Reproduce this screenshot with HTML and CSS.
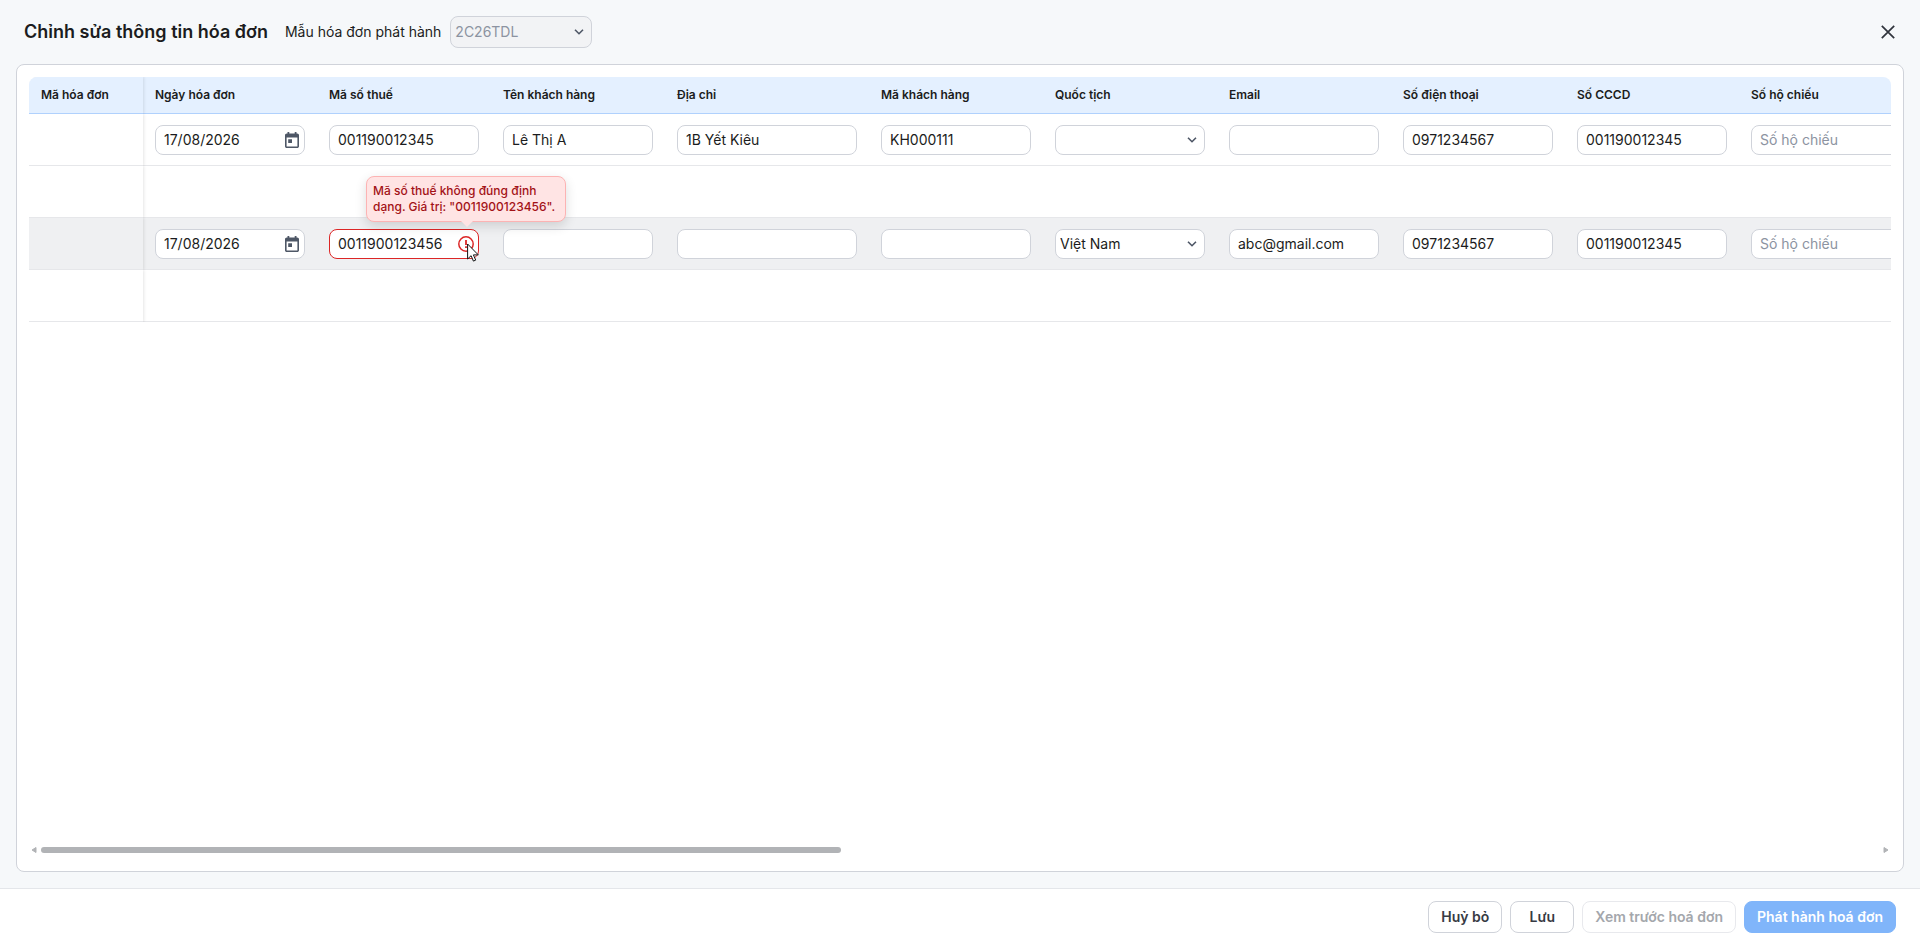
FILE: index.html
```html
<!DOCTYPE html>
<html lang="vi">
<head>
<meta charset="utf-8">
<title>Chỉnh sửa thông tin hóa đơn</title>
<link rel="stylesheet" href="styles.css">
</head>
<body>
<svg class="defs" aria-hidden="true">
  <symbol id="i-date" viewBox="0 0 14 16"><path fill="currentColor" fill-rule="evenodd" d="M2.500 0h1.800v1.500h5.400V0h1.800v1.500h.7c1 0 1.800.8 1.800 1.800v10.900c0 1-.8 1.800-1.800 1.800H1.800c-1 0-1.800-.8-1.800-1.800V3.300c0-1 .8-1.800 1.800-1.800h.7zM1.600 5.600v8.800h10.800V5.600zM3.200 7.200H7V11H3.200z"/></symbol>
  <symbol id="i-chevron" viewBox="0 0 10 6"><path fill="none" stroke="currentColor" stroke-width="1.600" d="M1 .7l4 4 4-4"/></symbol>
</svg>
<header class="topbar">
  <h1 class="title">Chỉnh sửa thông tin hóa đơn</h1>
  <label class="template-label" for="template">Mẫu hóa đơn phát hành</label>
  <span class="field template">
    <select class="control select" id="template" disabled><option>2C26TDL</option></select>
    <svg class="chevron"><use href="#i-chevron"/></svg>
  </span>
  <button class="close" type="button" aria-label="Đóng"><svg viewBox="0 0 14 14"><path fill="none" stroke="currentColor" stroke-width="1.700" d="M.8.8l12.400 12.400M13.200.8L.8 13.200"/></svg></button>
</header>
<main class="card">
  <div class="table-view">
    <table class="table">
      <colgroup><col class="c-code"><col class="c-std"><col class="c-std"><col class="c-std"><col class="c-wide"><col class="c-std"><col class="c-std"><col class="c-std"><col class="c-std"><col class="c-std"><col class="c-std"></colgroup>
      <thead>
        <tr><th class="pin">Mã hóa đơn</th><th>Ngày hóa đơn</th><th>Mã số thuế</th><th>Tên khách hàng</th><th>Địa chỉ</th><th>Mã khách hàng</th><th>Quốc tịch</th><th>Email</th><th>Số điện thoại</th><th>Số CCCD</th><th>Số hộ chiếu</th></tr>
      </thead>
      <tbody>
        <tr>
          <td class="pin"></td>
          <td><span class="field"><input class="control" aria-label="Ngày hóa đơn" value="17/08/2026"><svg class="date"><use href="#i-date"/></svg></span></td>
          <td><input class="control" aria-label="Mã số thuế" value="001190012345"></td>
          <td><input class="control" aria-label="Tên khách hàng" value="Lê Thị A"></td>
          <td><input class="control" aria-label="Địa chỉ" value="1B Yết Kiêu"></td>
          <td><input class="control" aria-label="Mã khách hàng" value="KH000111"></td>
          <td><span class="field"><select class="control select" aria-label="Quốc tịch"><option></option><option>Việt Nam</option></select><svg class="chevron"><use href="#i-chevron"/></svg></span></td>
          <td><input class="control" aria-label="Email"></td>
          <td><input class="control" aria-label="Số điện thoại" value="0971234567"></td>
          <td><input class="control" aria-label="Số CCCD" value="001190012345"></td>
          <td><input class="control" aria-label="Số hộ chiếu" placeholder="Số hộ chiếu"></td>
        </tr>
        <tr><td class="pin"></td><td colspan="10"></td></tr>
        <tr class="active">
          <td class="pin"></td>
          <td><span class="field"><input class="control" aria-label="Ngày hóa đơn" value="17/08/2026"><svg class="date"><use href="#i-date"/></svg></span></td>
          <td>
            <span class="field">
              <input class="control invalid" aria-label="Mã số thuế" aria-invalid="true" aria-describedby="tax-error" value="0011900123456">
              <svg class="alert" viewBox="0 0 16 16"><circle cx="8" cy="8" r="7.200" fill="none" stroke="currentColor" stroke-width="1.500"/><path fill="currentColor" d="M7.100 4h1.800v5H7.100zM7.100 10.200h1.800V12H7.100z"/></svg>
              <span class="tooltip" id="tax-error" role="tooltip">Mã số thuế không đúng định dạng. Giá trị: "0011900123456".</span>
              <svg class="cursor" viewBox="0 0 12 19"><path fill="#fff" stroke="#111" d="M.6 1v15l3.500-3.300 2.300 5.400 2.300-1-2.300-5.200h4.900z"/></svg>
            </span>
          </td>
          <td><input class="control" aria-label="Tên khách hàng"></td>
          <td><input class="control" aria-label="Địa chỉ"></td>
          <td><input class="control" aria-label="Mã khách hàng"></td>
          <td><span class="field"><select class="control select" aria-label="Quốc tịch"><option>Việt Nam</option></select><svg class="chevron"><use href="#i-chevron"/></svg></span></td>
          <td><input class="control" aria-label="Email" value="abc@gmail.com"></td>
          <td><input class="control" aria-label="Số điện thoại" value="0971234567"></td>
          <td><input class="control" aria-label="Số CCCD" value="001190012345"></td>
          <td><input class="control" aria-label="Số hộ chiếu" placeholder="Số hộ chiếu"></td>
        </tr>
        <tr><td class="pin"></td><td colspan="10"></td></tr>
      </tbody>
    </table>
  </div>
  <div class="scrollbar" aria-hidden="true">
    <svg class="arrow" viewBox="0 0 6 6"><path fill="currentColor" stroke="currentColor" stroke-linejoin="round" d="M5 .5v5L1 3z"/></svg>
    <div class="track"><div class="thumb"></div></div>
    <svg class="arrow" viewBox="0 0 6 6"><path fill="currentColor" stroke="currentColor" stroke-linejoin="round" d="M1 .5v5L5 3z"/></svg>
  </div>
</main>
<footer class="actions">
  <button class="btn" type="button">Huỷ bỏ</button>
  <button class="btn" type="button">Lưu</button>
  <button class="btn" type="button" disabled>Xem trước hoá đơn</button>
  <button class="btn primary" type="button" disabled>Phát hành hoá đơn</button>
</footer>
</body>
</html>
```
FILE: styles.css
```css
* { box-sizing: border-box; }

body {
  margin: 0;
  min-height: 100vh;
  display: flex;
  flex-direction: column;
  background: #f6f8fa;
  color: #1b1c20;
  font: 14px/20px Inter, "Noto Sans", sans-serif;
}

button, input, select { font: inherit; color: inherit; }

.defs { position: absolute; width: 0; height: 0; }

.topbar {
  display: flex;
  align-items: center;
  height: 64px;
  padding: 0 24px;
}
.title { margin: 0 17px 0 0; font-size: 18px; line-height: 24px; font-weight: 600; }
.template-label { margin-right: 9px; }
.template { width: 142px; }
.close {
  display: flex;
  margin-left: auto;
  padding: 2px 1px;
  border: 0;
  background: none;
  color: #30343c;
}
.close svg { width: 14px; height: 14px; }

.card {
  flex: 1;
  display: flex;
  flex-direction: column;
  margin: 0 16px 16px;
  padding: 12px;
  border: 1px solid #d0d3da;
  border-radius: 8px;
  background: #fff;
}
.table-view { flex: 1; overflow: hidden; border-radius: 8px 8px 0 0; }
.table { table-layout: fixed; width: 1884px; border-collapse: separate; border-spacing: 0; }
.c-code { width: 114px; }
.c-std { width: 174px; }
.c-wide { width: 204px; }

th {
  height: 37px;
  padding: 0 12px;
  border-bottom: 1px solid #b0d1fd;
  background: #e4f0ff;
  font-size: 12px;
  line-height: 16px;
  font-weight: 600;
  text-align: left;
}
td { height: 52px; padding: 0 12px; border-bottom: 1px solid #e6e7ea; }
.pin { box-shadow: 1px 0 3px rgba(0, 0, 0, .1); clip-path: inset(0 -4px 0 0); }
.active td { background: #eff0f2; }

.field { position: relative; display: block; }
.control {
  display: block;
  width: 100%;
  height: 30px;
  padding: 0 8px;
  border: 1px solid #d0d3da;
  border-radius: 8px;
  background: #fff;
  outline: 0;
}
.control::placeholder { color: #8c93a1; opacity: 1; }
.select { appearance: none; padding: 0 24px 0 4px; }
.template .select { height: 32px; background: #f2f3f5; color: #8c93a1; opacity: 1; }
.invalid { border-color: #dc2626; }
.date, .chevron, .alert, .cursor, .tooltip { position: absolute; pointer-events: none; }
.date { right: 6px; top: 7px; width: 14px; height: 16px; color: #4e5766; }
.chevron { right: 8px; top: 50%; width: 10px; height: 6px; margin-top: -3px; color: #4e5766; }
.alert { right: 5px; top: 7px; width: 16px; height: 16px; color: #dc2626; }
.cursor { right: 0; top: 14px; width: 12px; height: 19px; }

.tooltip {
  right: -87px;
  bottom: 37px;
  width: 200px;
  padding: 6px;
  border: 1px solid #fcb3b3;
  border-radius: 8px;
  background: #ffe4e4;
  box-shadow: 0 4px 12px rgba(0, 0, 0, .14);
  color: #a31217;
  font-size: 12px;
  line-height: 16px;
  font-weight: 500;
}
.tooltip::after {
  content: "";
  position: absolute;
  left: 94px;
  top: 100%;
  border: 6px solid transparent;
  border-top-color: #ffe4e4;
  border-bottom: 0;
}

.scrollbar { display: flex; align-items: center; gap: 4px; height: 18px; padding: 0 2px; color: #b1b3b6; }
.arrow { width: 6px; height: 6px; }
.track { flex: 1; }
.thumb { width: 800px; max-width: 100%; height: 6px; border-radius: 3px; background: #b1b3b6; }

.actions {
  display: flex;
  justify-content: flex-end;
  gap: 8px;
  padding: 12px 24px;
  border-top: 1px solid #e4e6ea;
  background: #fff;
}
.btn {
  min-width: 64px;
  height: 32px;
  padding: 0 12px;
  border: 1px solid #d0d3da;
  border-radius: 8px;
  background: #fff;
  color: #373b44;
  font-weight: 600;
}
.btn:disabled { border-color: #e8e9ed; color: #a4a7ac; }
.btn.primary:disabled { border-color: #80b5fa; background: #80b5fa; color: #fff; }
```
